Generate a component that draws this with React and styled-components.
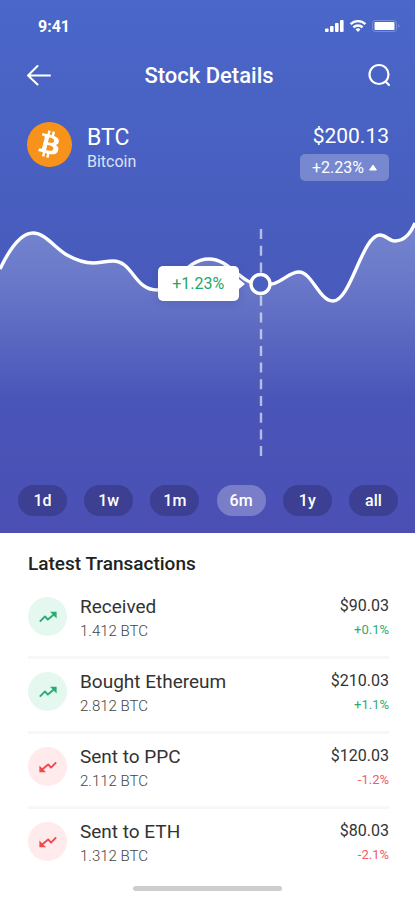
import React from 'react';
import styled, { createGlobalStyle } from 'styled-components';
import { FaBitcoin } from 'react-icons/fa';

const ranges = ['1d', '1w', '1m', '6m', '1y', 'all'];

const transactions = [
  { name: 'Received', amount: '1.412 BTC', price: '$90.03', change: '+0.1%', up: true },
  { name: 'Bought Ethereum', amount: '2.812 BTC', price: '$210.03', change: '+1.1%', up: true },
  { name: 'Sent to PPC', amount: '2.112 BTC', price: '$120.03', change: '-1.2%', up: false },
  { name: 'Sent to ETH', amount: '1.312 BTC', price: '$80.03', change: '-2.1%', up: false },
];

const linePath =
  'M0 69 C11 46 22 33 33 33 C45 33 55 48 67 55 C76 60 84 63 93 63 C100 63 106 61 113 61 ' +
  'C133 61 134 90 157 90 C176 90 184 59 209 59 C230 59 240 84 261 85 C280 87 287 72 299 72 ' +
  'C312 72 319 101 333 101 C351 101 362 35 380 35 C386 35 389 41 395 41 C403 41 410 35 415 23';

function StatusIcons() {
  return (
    <svg width="76" height="16" viewBox="0 0 76 16" fill="#fff" aria-hidden="true">
      <rect x="0" y="10.5" width="3.6" height="3.5" rx="1" />
      <rect x="5" y="8" width="3.6" height="6" rx="1" />
      <rect x="10" y="5" width="3.6" height="9" rx="1" />
      <rect x="15" y="2" width="3.6" height="12" rx="1" />
      <g fill="none" stroke="#fff" strokeWidth="2.4">
        <path d="M25.6 6.2 A10.4 10.4 0 0 1 40.4 6.2" />
        <path d="M28.4 9.4 A6.4 6.4 0 0 1 37.6 9.4" />
      </g>
      <path d="M30.6 11.4 A3.6 3.6 0 0 1 35.4 11.4 L33 14 Z" />
      <rect x="47.5" y="2.5" width="24" height="11" rx="3" fill="none" stroke="#fff" strokeOpacity="0.25" />
      <rect x="49.5" y="4" width="20" height="8" rx="1" />
      <path d="M73.5 6 Q75.5 8 73.5 10 Z" opacity="0.4" />
    </svg>
  );
}

function TrendIcon({ up }) {
  return (
    <Trend $up={up}>
      <svg width="18" height="12" viewBox="0 0 18 12" fill="none" aria-hidden="true">
        <g transform={up ? undefined : 'rotate(180 9 6)'}>
          <path d="M0.8 10.6 L6 5.4 L8.8 8.6 L15.5 3" stroke="currentColor" strokeWidth="1.9" strokeLinejoin="round" />
          <path d="M11 0.8 H17.6 V7.4 Z" fill="currentColor" />
        </g>
      </svg>
    </Trend>
  );
}

export default class App extends React.Component {

  constructor(props) {
    super(props);

    this.state = {
      range: '6m',
    };
  }

  render() {
    const { range } = this.state;

    return (
      <Screen>
        <GlobalStyle />

        <Hero>
          <StatusBar>
            <span>9:41</span>
            <StatusIcons />
          </StatusBar>

          <Header>
            <IconButton aria-label="Back">
              <svg width="24" height="24" viewBox="0 0 24 24" fill="none" stroke="#fff" strokeWidth="2" strokeLinecap="round" strokeLinejoin="round">
                <path d="M23 12.5 H1 M10.5 3 L1 12.5 L10.5 21.5" />
              </svg>
            </IconButton>
            <Title>Stock Details</Title>
            <IconButton aria-label="Search">
              <svg width="24" height="24" viewBox="0 0 24 24" fill="none" stroke="#fff" strokeWidth="2.2" strokeLinecap="round">
                <circle cx="12" cy="11.5" r="9.5" />
                <path d="M18.8 18.8 L22 22" />
              </svg>
            </IconButton>
          </Header>

          <Coin>
            <CoinLogo><FaBitcoin /></CoinLogo>
            <CoinInfo>
              <Symbol>BTC</Symbol>
              <CoinName>Bitcoin</CoinName>
            </CoinInfo>
            <Quote>
              <CoinPrice>$200.13</CoinPrice>
              <Badge>
                +2.23%
                <svg width="8" height="7" viewBox="0 0 8 7" aria-hidden="true">
                  <path d="M4 1 L7.4 6 H0.6 Z" fill="#fff" stroke="#fff" strokeLinejoin="round" />
                </svg>
              </Badge>
            </Quote>
          </Coin>

          <Chart>
            <svg viewBox="0 0 415 264" aria-hidden="true">
              <defs>
                <linearGradient id="area" gradientUnits="userSpaceOnUse" x1="0" y1="30" x2="0" y2="200">
                  <stop offset="0" stopColor="#fff" stopOpacity="0.24" />
                  <stop offset="0.3" stopColor="#fff" stopOpacity="0.18" />
                  <stop offset="1" stopColor="#fff" stopOpacity="0" />
                </linearGradient>
              </defs>
              <path d={`${linePath} V200 H0 Z`} fill="url(#area)" />
              <path d="M261 29 V256" stroke="#fff" strokeOpacity="0.6" strokeWidth="2.4" strokeDasharray="10 6.7" />
              <path d={linePath} fill="none" stroke="#fff" strokeWidth="3.4" />
              <circle cx="260.5" cy="84" r="9.5" fill="#4a60c0" stroke="#fff" strokeWidth="3.4" />
            </svg>
            <Tooltip>+1.23%</Tooltip>
          </Chart>

          <Ranges>
            {ranges.map(r => (
              <Range key={r} $active={r === range} onClick={() => this.setState({ range: r })}>{r}</Range>
            ))}
          </Ranges>
        </Hero>

        <Transactions>
          <Heading>Latest Transactions</Heading>
          <List>
            {transactions.map(t => (
              <Row key={t.name}>
                <TrendIcon up={t.up} />
                <Details>
                  <Name>{t.name}</Name>
                  <Amount>{t.amount}</Amount>
                </Details>
                <Value>
                  <Price>{t.price}</Price>
                  <Change $up={t.up}>{t.change}</Change>
                </Value>
              </Row>
            ))}
          </List>
        </Transactions>
        <HomeBar />
      </Screen>
    );
  }

}

const GlobalStyle = createGlobalStyle`
  * {
    box-sizing: border-box;
  }

  body {
    margin: 0;
    background: #fff;
    font-family: Roboto, "Liberation Sans", sans-serif;
  }

  button {
    font-family: inherit;
    border: none;
    padding: 0;
    cursor: pointer;
  }
`;

const Screen = styled.div`
  display: flex;
  flex-direction: column;
  min-height: 100vh;
`;

const Hero = styled.div`
  background: linear-gradient(#4a67c9, #485fc0 35%, #4b4fb4);
  color: #fff;
  padding-bottom: 17px;
`;

const StatusBar = styled.div`
  display: flex;
  align-items: center;
  justify-content: space-between;
  height: 52px;
  padding: 0 14px 0 38px;
  font-size: 16px;
  font-weight: 700;
`;

const Header = styled.header`
  display: flex;
  align-items: center;
  justify-content: space-between;
  height: 46px;
  padding: 0 24px 0 27px;
`;

const IconButton = styled.button`
  display: flex;
  background: none;
`;

const Title = styled.h1`
  margin: 0;
  font-size: 22px;
  font-weight: 500;
`;

const Coin = styled.div`
  display: flex;
  padding: 24px 26px 0 27px;
`;

const CoinLogo = styled.div`
  display: flex;
  width: 45px;
  height: 45px;
  border-radius: 50%;
  background: radial-gradient(#fff 60%, #f7931a 62%);
  color: #f7931a;
  font-size: 45px;
`;

const CoinInfo = styled.div`
  flex: 1;
  padding: 2px 0 0 15px;
`;

const Symbol = styled.div`
  font-size: 23px;
  line-height: 28px;
`;

const CoinName = styled.div`
  font-size: 16px;
  line-height: 20px;
  color: #dde3f8;
`;

const Quote = styled.div`
  display: flex;
  flex-direction: column;
  align-items: flex-end;
`;

const CoinPrice = styled.div`
  font-size: 21px;
  line-height: 28px;
`;

const Badge = styled.div`
  display: flex;
  align-items: center;
  justify-content: center;
  gap: 5px;
  min-width: 89px;
  height: 27px;
  margin-top: 4px;
  border-radius: 5px;
  background: rgba(255, 255, 255, 0.25);
  font-size: 16px;
`;

const Chart = styled.div`
  position: relative;
  margin-top: 19px;

  svg {
    display: block;
    width: 100%;
  }
`;

const Tooltip = styled.div`
  position: absolute;
  top: 25%;
  left: 38%;
  display: flex;
  align-items: center;
  justify-content: center;
  width: 81px;
  height: 35px;
  border-radius: 5px;
  background: #fff;
  color: #25a56a;
  font-size: 16px;
  box-shadow: 0 2px 8px rgba(40, 50, 120, 0.2);

  &::after {
    content: '';
    position: absolute;
    left: 100%;
    border: 5px solid transparent;
    border-left: 6px solid #fff;
    border-right: 0;
  }
`;

const Ranges = styled.div`
  display: flex;
  justify-content: space-between;
  margin-top: 21px;
  padding: 0 17px 0 18px;
`;

const Range = styled.button`
  width: 49px;
  height: 31px;
  border-radius: 16px;
  background: ${props => (props.$active ? '#7a7ec9' : '#3d3f92')};
  color: #fff;
  font-size: 16px;
  font-weight: 500;
`;

const Transactions = styled.section`
  padding: 20px 26px 0 28px;
`;

const Heading = styled.h2`
  margin: 0;
  font-size: 19px;
  line-height: 22px;
  font-weight: 500;
  color: #222;
`;

const List = styled.ul`
  list-style: none;
  margin: 9px 0 0;
  padding: 0;
`;

const Row = styled.li`
  display: flex;
  height: 75px;
  padding-top: 11px;
  border-bottom: 3px solid #f7f7f7;

  &:last-child {
    border-bottom: none;
  }
`;

const Trend = styled.div`
  display: flex;
  align-items: center;
  justify-content: center;
  width: 39px;
  height: 39px;
  margin-top: 2px;
  border-radius: 50%;
  background: ${props => (props.$up ? '#e5f8ef' : '#ffebeb')};
  color: ${props => (props.$up ? '#2bab73' : '#f04a50')};
`;

const Details = styled.div`
  flex: 1;
  padding-left: 13px;
`;

const Name = styled.div`
  font-size: 19px;
  line-height: 24px;
  color: #333;
`;

const Amount = styled.div`
  font-size: 15px;
  line-height: 24px;
  font-weight: 300;
  color: #444;
`;

const Value = styled.div`
  text-align: right;
`;

const Price = styled.div`
  font-size: 16px;
  line-height: 22px;
  color: #333;
`;

const Change = styled.div`
  font-size: 13px;
  line-height: 26px;
  color: ${props => (props.$up ? '#2bab73' : '#f25c62')};
`;

const HomeBar = styled.div`
  width: 149px;
  height: 5px;
  margin: auto auto 9px;
  border-radius: 3px;
  background: #cdcdcd;
`;
